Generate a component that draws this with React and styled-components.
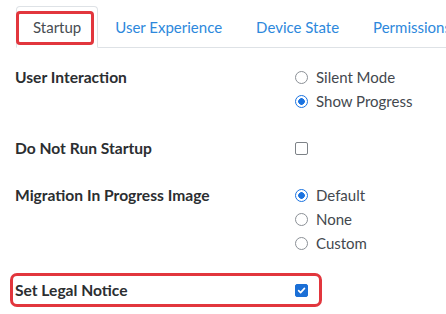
import React from "react";
import styled, { createGlobalStyle } from "styled-components";

const GlobalStyle = createGlobalStyle`
  body {
    margin: 0;
    background: #fff;
    font-family: Lato, "Open Sans", "Liberation Sans", sans-serif;
  }
`;

const tabs = ["Startup", "User Experience", "Device State", "Permissions"];

const Checkbox = ({ checked }) => (
  <Box $checked={checked}>
    {checked && (
      <svg width="9" height="9" viewBox="0 0 10 10">
        <path d="M1.8 5.2 L4 7.4 L8.3 2.6" fill="none" stroke="#fff" strokeWidth="1.8" strokeLinecap="round" strokeLinejoin="round" />
      </svg>
    )}
  </Box>
);

const RadioGroup = ({ options, value }) => (
  <Options>
    {options.map((o) => (
      <Option key={o}>
        <Radio $checked={o === value} />
        {o}
      </Option>
    ))}
  </Options>
);

const App = () => {
  return (
    <Page>
      <GlobalStyle />
      <TabBar>
        {tabs.map((t, i) => (
          <Tab key={t} $active={i === 0}>
            {t}
          </Tab>
        ))}
      </TabBar>

      <Form>
        <Row>
          <Label>User Interaction</Label>
          <RadioGroup options={["Silent Mode", "Show Progress"]} value="Show Progress" />
        </Row>
        <Row>
          <Label>Do Not Run Startup</Label>
          <Control>
            <Checkbox />
          </Control>
        </Row>
        <Row>
          <Label>Migration In Progress Image</Label>
          <RadioGroup options={["Default", "None", "Custom"]} value="Default" />
        </Row>
        {/* 강조 표시된 행 */}
        <Row $highlight>
          <Label>Set Legal Notice</Label>
          <Control>
            <Checkbox checked />
          </Control>
        </Row>
      </Form>
    </Page>
  );
};

export default App;

const Page = styled.div`
  width: 446px;
  height: 314px;
  overflow: hidden;
  padding-top: 6px;
  box-sizing: border-box;
`;

const TabBar = styled.div`
  display: flex;
  margin-left: 16px;
  border-bottom: 1px solid #dee2e6;
  white-space: nowrap;
`;

const Tab = styled.div`
  position: relative;
  flex-shrink: 0;
  padding: 8px 16px;
  margin-bottom: -1px;
  font-size: 15px;
  line-height: 24px;
  border: 1px solid transparent;
  border-radius: 4px 4px 0 0;
  color: ${(p) => (p.$active ? "#474c52" : "#2d88dc")};
  ${(p) =>
    p.$active &&
    `
    background: #fff;
    border-color: #dee2e6 #dee2e6 #fff;
    &::after {
      content: "";
      position: absolute;
      left: -1px;
      top: 4px;
      width: 78px;
      height: 34px;
      box-sizing: border-box;
      border: 3px solid #e2363d;
      border-radius: 4px;
    }
  `}
`;

const Form = styled.div`
  display: flex;
  flex-direction: column;
  gap: 23px;
  padding: 17px 0 0 15px;
`;

const Row = styled.div`
  display: grid;
  grid-template-columns: 280px auto;
  width: 302px;
  white-space: nowrap;
  ${(p) =>
    p.$highlight &&
    `
    outline: 3px solid #e2363d;
    outline-offset: 2px;
    border-radius: 2px;
  `}
`;

const Label = styled.div`
  font-size: 15.6px;
  font-weight: 700;
  line-height: 24px;
  color: #2b2e31;
`;

const Control = styled.div`
  display: flex;
  align-items: center;
  height: 24px;
`;

const Options = styled.div`
  display: flex;
  flex-direction: column;
`;

const Option = styled.div`
  display: flex;
  align-items: center;
  gap: 8px;
  font-size: 15px;
  line-height: 24px;
  color: #43484e;
`;

const Radio = styled.span`
  width: 13px;
  height: 13px;
  box-sizing: border-box;
  border-radius: 50%;
  border: 1px solid ${(p) => (p.$checked ? "#1b73e0" : "#8b9096")};
  background: ${(p) =>
    p.$checked ? "radial-gradient(circle, #1b73e0 0 3px, #fff 3.6px)" : "#fff"};
`;

const Box = styled.span`
  display: flex;
  align-items: center;
  justify-content: center;
  width: 13px;
  height: 13px;
  box-sizing: border-box;
  border-radius: 2px;
  border: 1px solid ${(p) => (p.$checked ? "#1b6fd6" : "#7d8287")};
  background: ${(p) => (p.$checked ? "#1b6fd6" : "#fff")};
`;
